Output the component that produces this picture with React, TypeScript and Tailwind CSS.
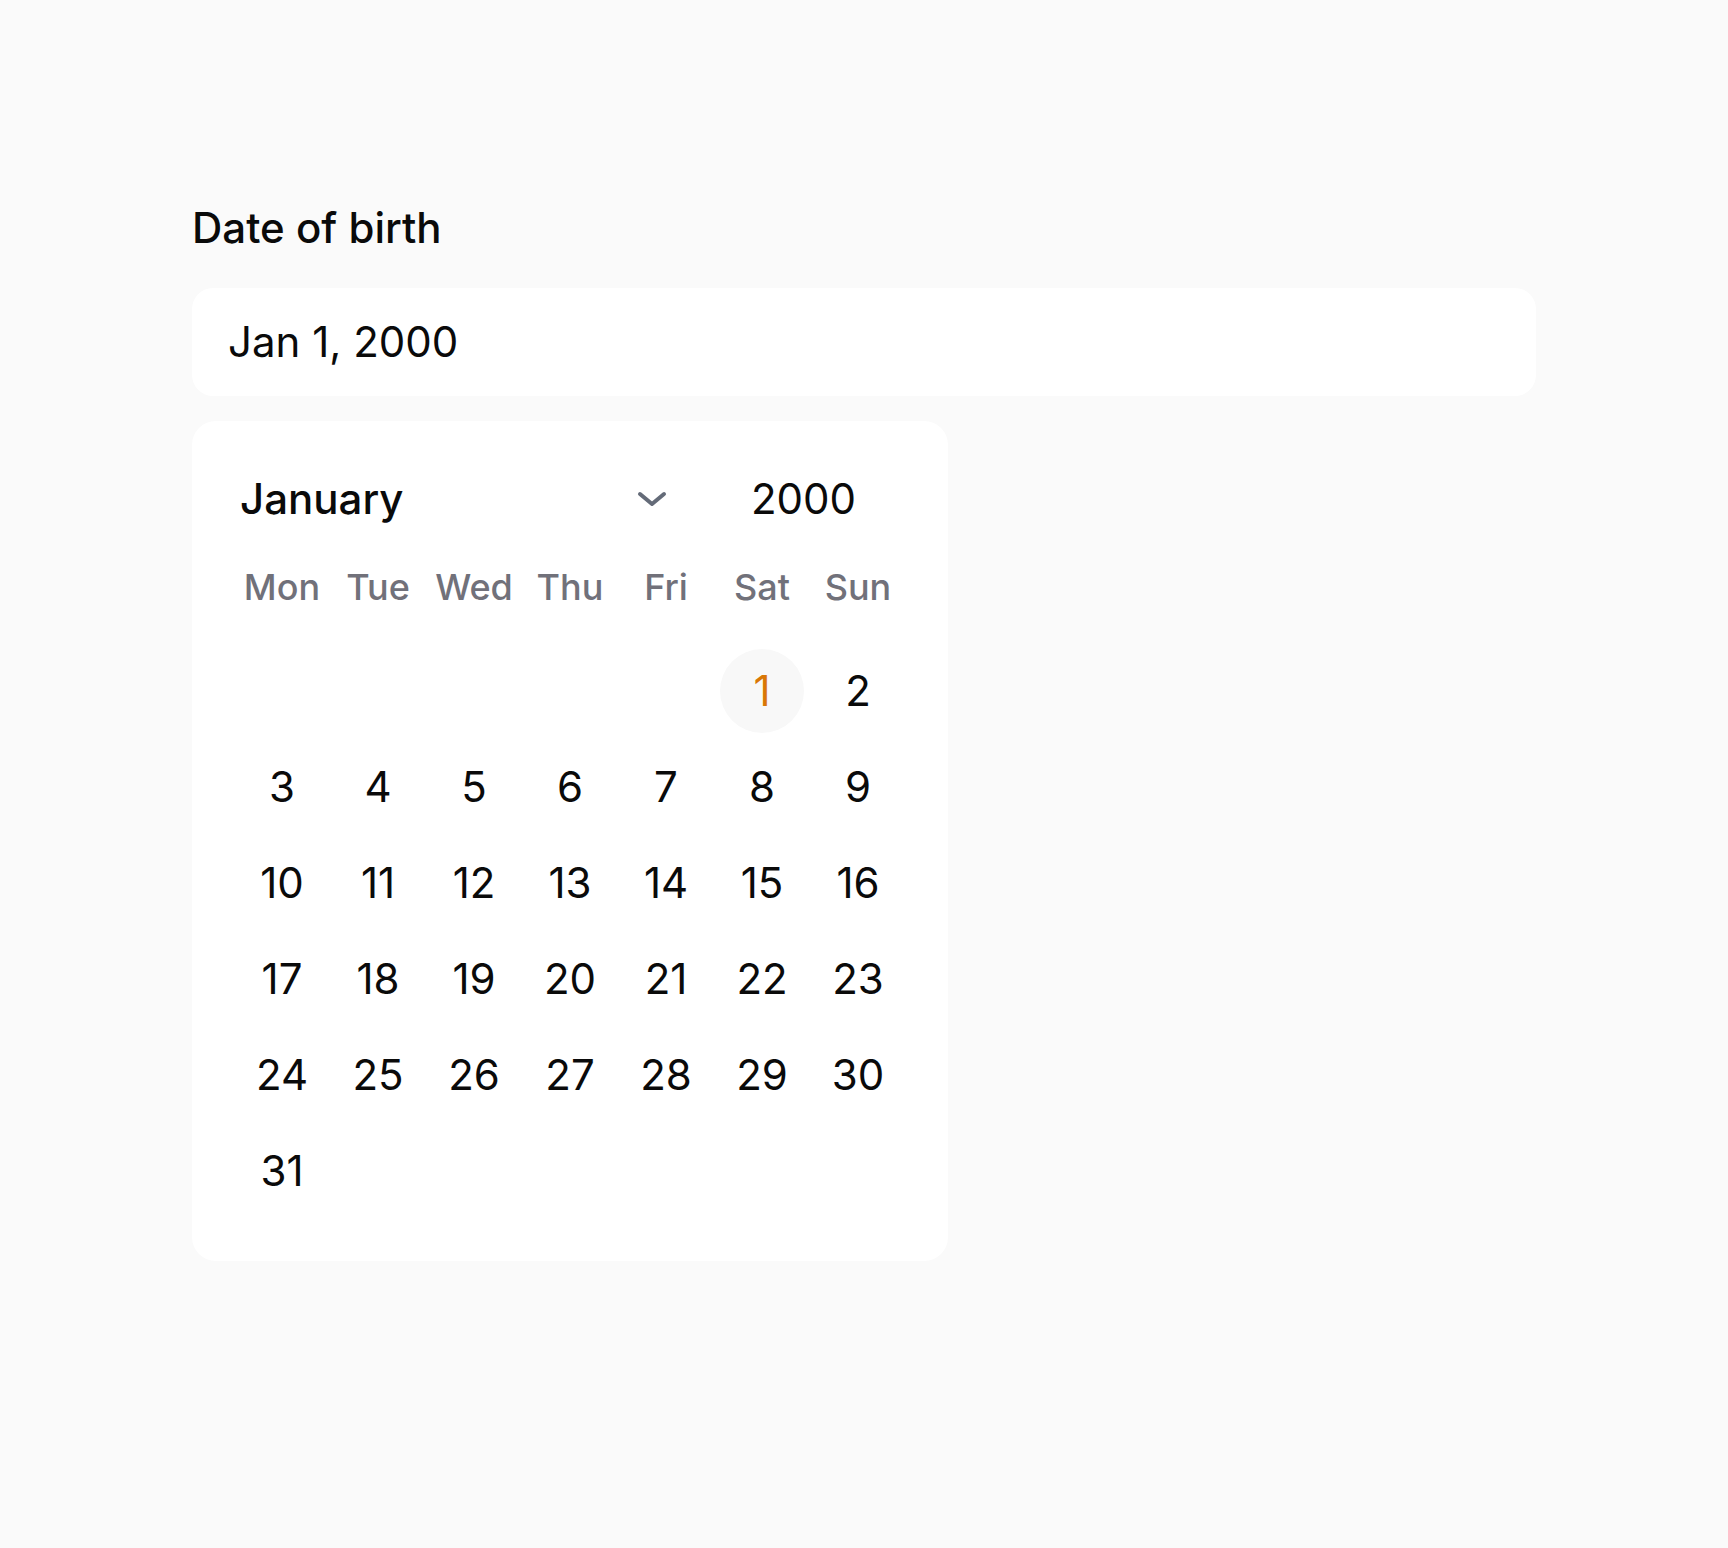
import React from 'react';

const weekdays = ['Mon', 'Tue', 'Wed', 'Thu', 'Fri', 'Sat', 'Sun'];

// January 2000 starts on a Saturday (Mon-first grid => 5 blanks)
const cells: (number | null)[] = [
  ...Array(5).fill(null),
  ...Array.from({ length: 31 }, (_, i) => i + 1),
];
while (cells.length % 7 !== 0) cells.push(null);

const selected = 1;

const App: React.FC = () => {
  return (
    <div
      className="min-h-[1548px] w-full bg-[#fafafa] pl-[192px] pt-[204px] text-[#0a0a0a]"
      style={{ fontFamily: 'Inter, "Noto Sans", sans-serif' }}
    >
      {/* Label */}
      <div className="h-[48px] text-[42px] font-medium leading-[48px]">Date of birth</div>

      {/* Input */}
      <div className="mt-[36px] flex h-[108px] w-[1344px] items-center rounded-[21px] bg-white pl-[36px] text-[42px] leading-none">
        Jan 1, 2000
      </div>

      {/* Calendar popover */}
      <div className="mt-[25px] w-[756px] rounded-[24px] bg-white p-[42px]">
        {/* Header */}
        <div className="flex h-[72px] items-center">
          <div className="flex w-[442px] items-center justify-between pl-[6px] pr-[9px]">
            <span className="text-[42px] font-medium leading-none">January</span>
            <svg width="30" height="16" viewBox="0 0 30 16" fill="none">
              <polyline
                points="3,3 15,13 27,3"
                stroke="#646b78"
                strokeWidth="4"
                strokeLinecap="round"
                strokeLinejoin="round"
              />
            </svg>
          </div>
          <span className="ml-[75px] text-[42px] leading-none">2000</span>
        </div>

        {/* Weekdays */}
        <div className="mt-[28px] grid h-[48px] grid-cols-7">
          {weekdays.map((d) => (
            <div
              key={d}
              className="flex items-center justify-center text-[36px] font-medium leading-none text-[#71717a]"
            >
              {d}
            </div>
          ))}
        </div>

        {/* Days */}
        <div className="mt-[32px] grid grid-cols-7">
          {cells.map((n, i) => (
            <div key={i} className="flex h-[96px] items-center justify-center">
              {n !== null &&
                (n === selected ? (
                  <span className="flex h-[84px] w-[84px] items-center justify-center rounded-full bg-[#f8f8f8] text-[42px] leading-none text-[#d97706]">
                    {n}
                  </span>
                ) : (
                  <span className="text-[42px] leading-none">{n}</span>
                ))}
            </div>
          ))}
        </div>
      </div>
    </div>
  );
};

export default App;
